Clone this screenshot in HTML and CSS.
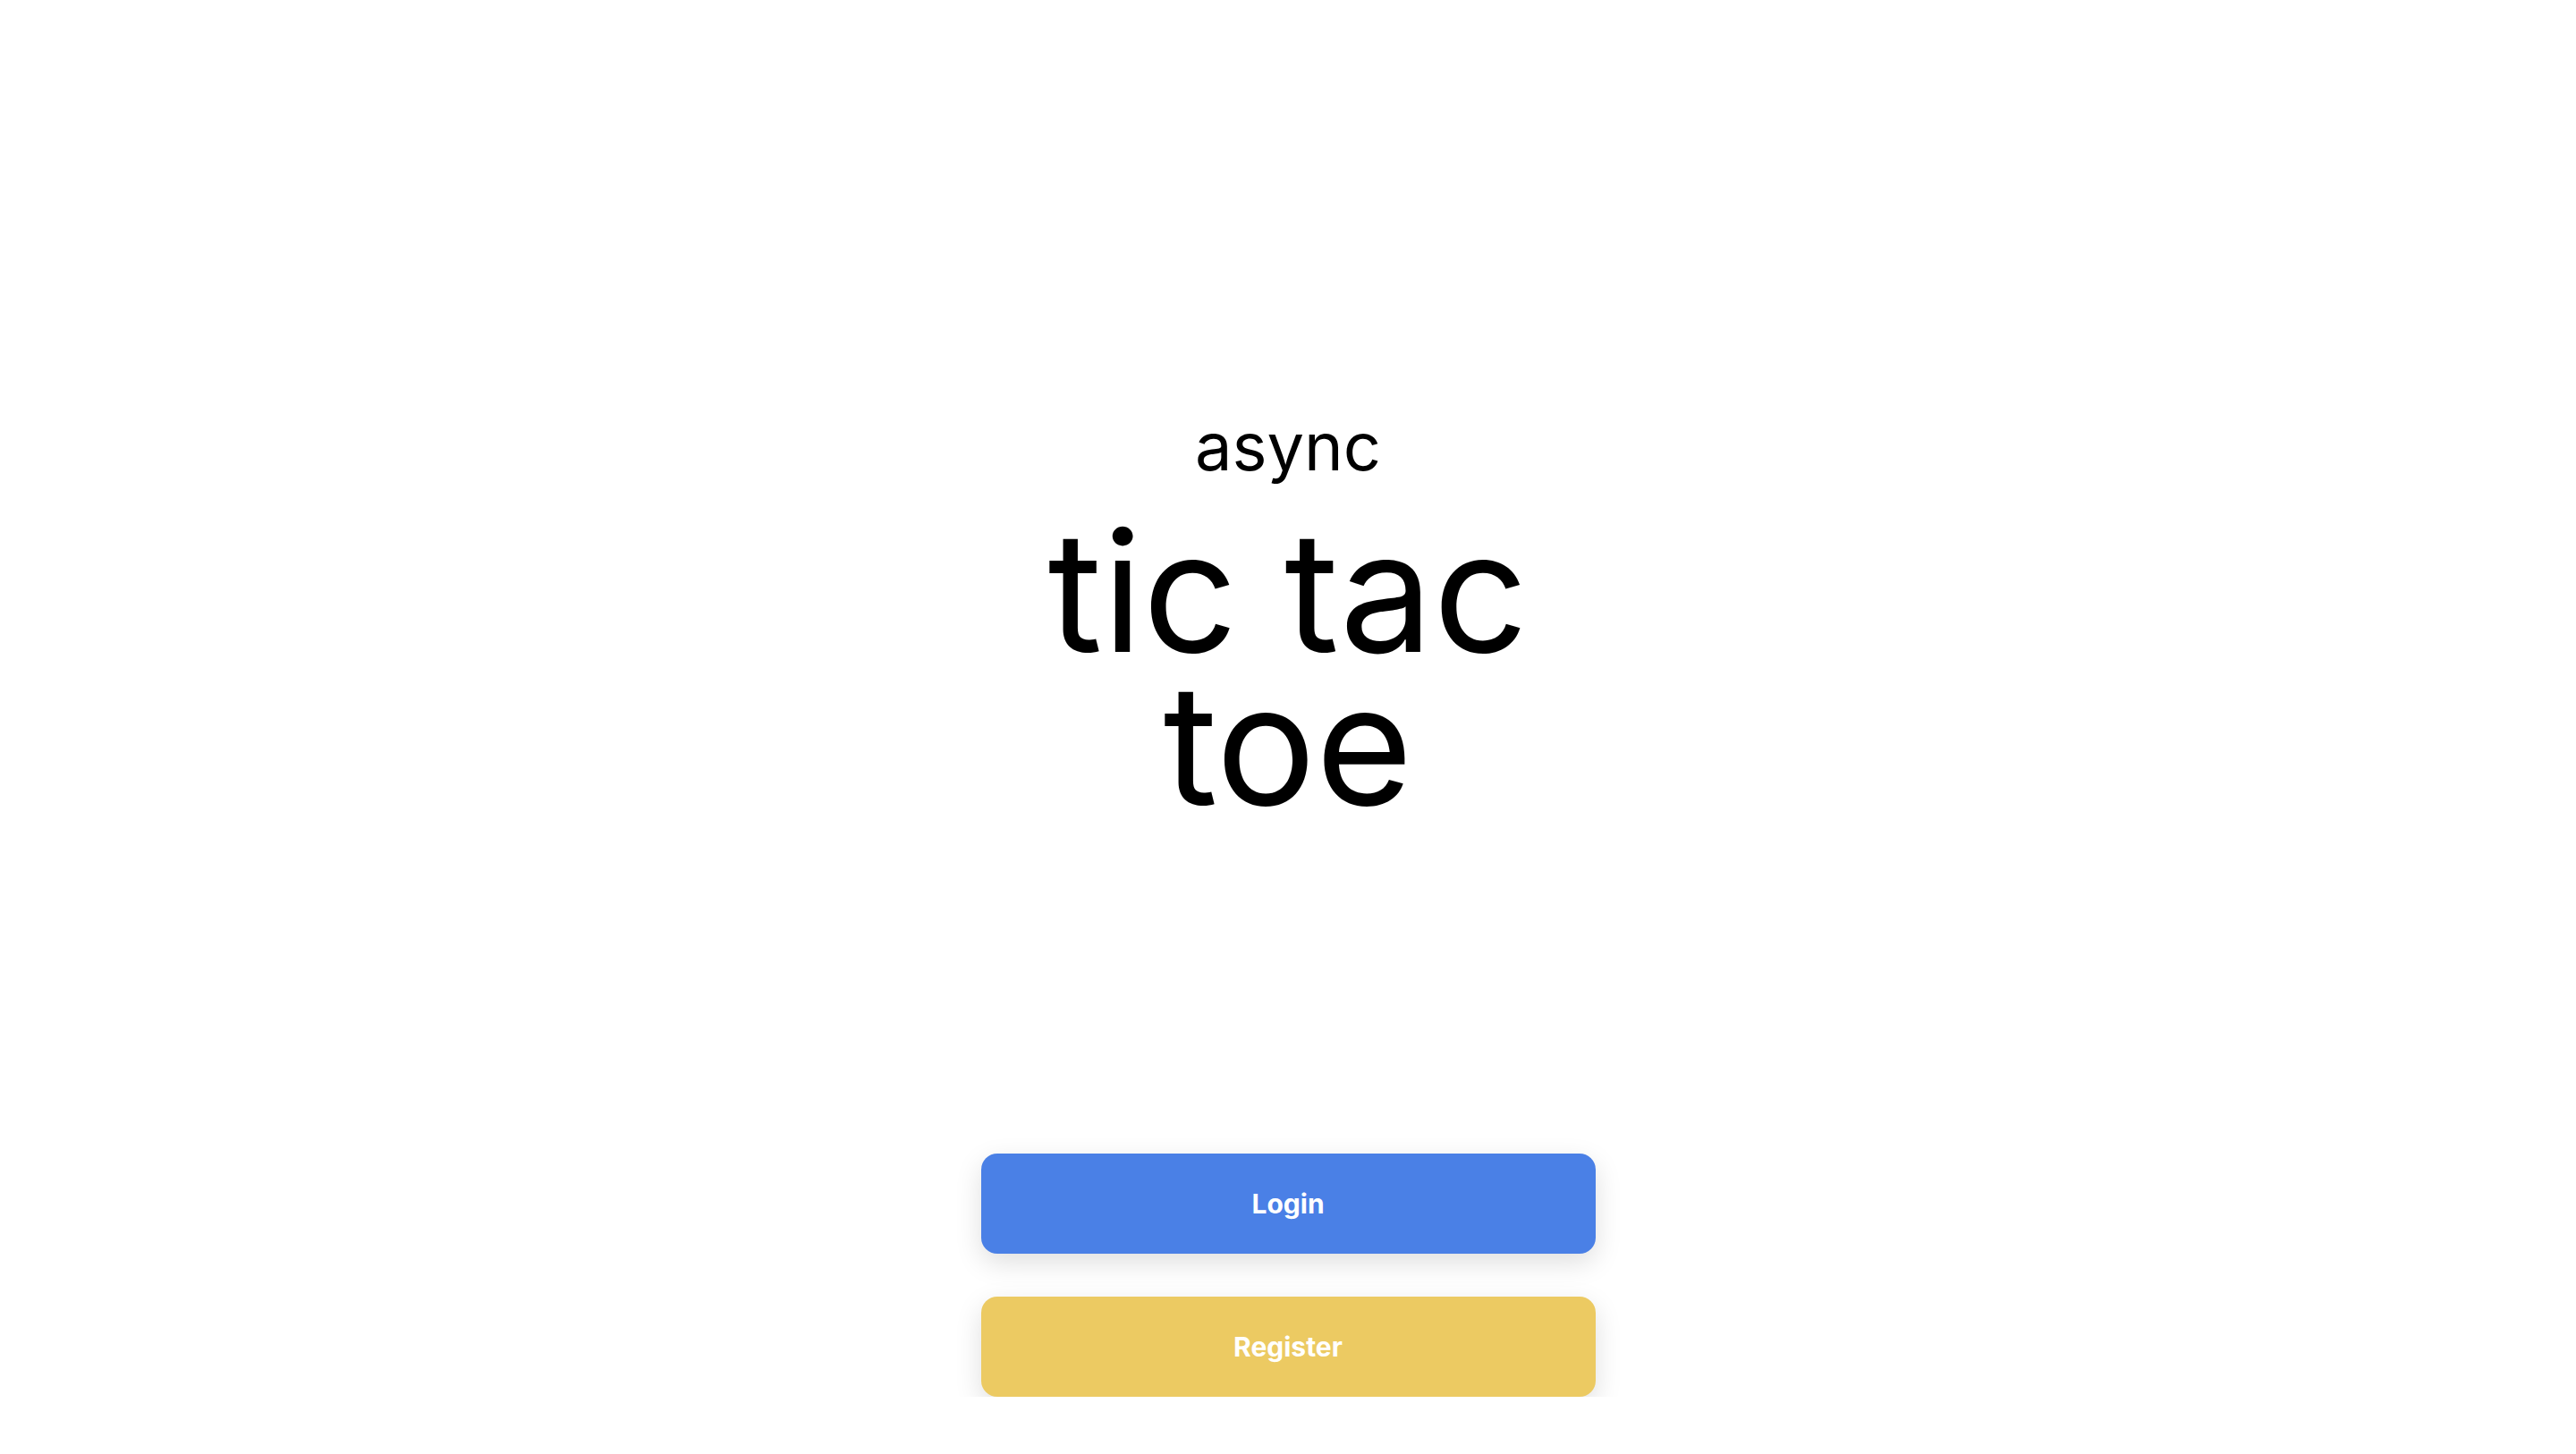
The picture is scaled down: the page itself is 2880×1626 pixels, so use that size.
FILE: index.html
```html
<!DOCTYPE html>
<html lang="en">
<head>
<meta charset="utf-8">
<title>async tic tac toe</title>
<link rel="stylesheet" href="styles.css">
</head>
<body>
<main class="page">
  <header class="brand">
    <div class="brand-sub">async</div>
    <h1 class="brand-title">tic tac<br>toe</h1>
  </header>
  <nav class="actions">
    <button class="btn btn-login" type="button">Login</button>
    <button class="btn btn-register" type="button">Register</button>
  </nav>
</main>
</body>
</html>
```
FILE: styles.css
```css
html, body {
  margin: 0;
  padding: 0;
  background: #ffffff;
}
body {
  font-family: Inter, "Noto Sans", sans-serif;
  color: #000;
}
.page {
  display: flex;
  flex-direction: column;
  align-items: center;
  padding-top: 444px;
}
.brand {
  display: flex;
  flex-direction: column;
  align-items: center;
  text-align: center;
}
.brand-sub {
  font-size: 74px;
  line-height: 110px;
  font-weight: 400;
}
.brand-title {
  margin: 22px 0 0 0;
  font-size: 186px;
  line-height: 171px;
  font-weight: 400;
}
.actions {
  display: flex;
  flex-direction: column;
  gap: 48px;
  margin-top: 372px;
}
.btn {
  width: 687px;
  height: 112px;
  border: none;
  border-radius: 18px;
  color: #fff;
  font-family: Inter, "Noto Sans", sans-serif;
  font-weight: 700;
  font-size: 30px;
  box-shadow: 0 10px 30px rgba(0, 0, 0, 0.13);
  cursor: pointer;
}
.btn-login {
  background: #4a80e6;
}
.btn-register {
  background: #ecca62;
}
```
